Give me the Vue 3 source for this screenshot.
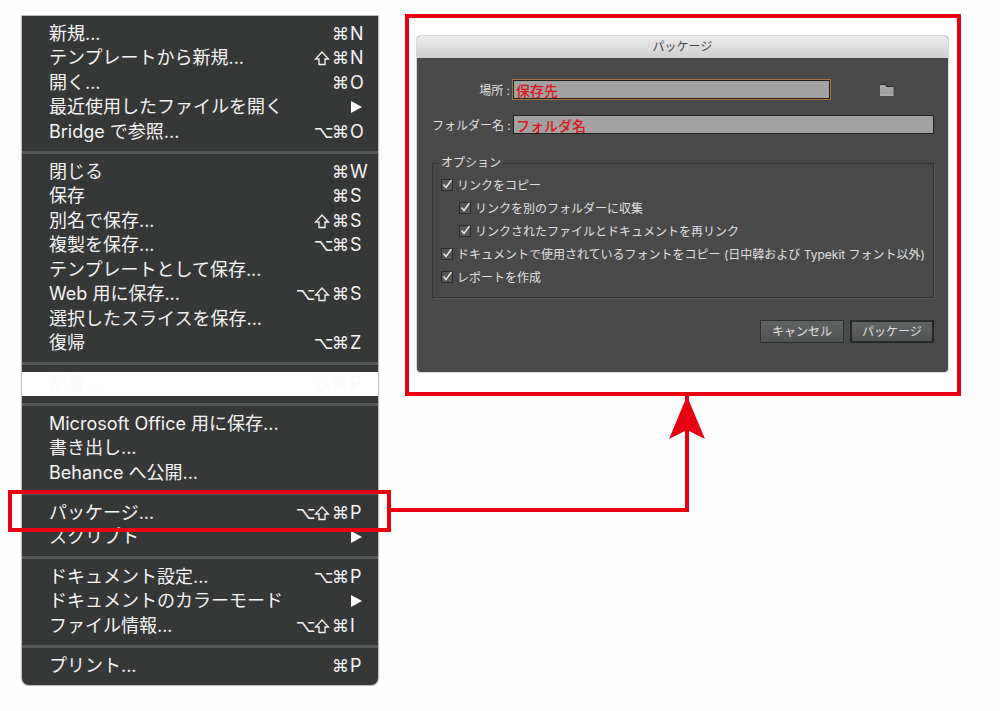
<script setup>
import { ref } from 'vue'

const groups = [
  [
    { label: '新規...', mods: ['⌘'], key: 'N' },
    { label: 'テンプレートから新規...', mods: ['⇧', '⌘'], key: 'N' },
    { label: '開く...', mods: ['⌘'], key: 'O' },
    { label: '最近使用したファイルを開く', sub: true },
    { label: 'Bridge で参照...', mods: ['⌥', '⌘'], key: 'O' },
  ],
  [
    { label: '閉じる', mods: ['⌘'], key: 'W' },
    { label: '保存', mods: ['⌘'], key: 'S' },
    { label: '別名で保存...', mods: ['⇧', '⌘'], key: 'S' },
    { label: '複製を保存...', mods: ['⌥', '⌘'], key: 'S' },
    { label: 'テンプレートとして保存...' },
    { label: 'Web 用に保存...', mods: ['⌥', '⇧', '⌘'], key: 'S' },
    { label: '選択したスライスを保存...' },
    { label: '復帰', mods: ['⌥', '⌘'], key: 'Z' },
  ],
  [{ label: '配置...', mods: ['⇧', '⌘'], key: 'P', masked: true }],
  [
    { label: 'Microsoft Office 用に保存...' },
    { label: '書き出し...' },
    { label: 'Behance へ公開...' },
  ],
  [
    { label: 'パッケージ...', mods: ['⌥', '⇧', '⌘'], key: 'P', marked: true },
    { label: 'スクリプト', sub: true },
  ],
  [
    { label: 'ドキュメント設定...', mods: ['⌥', '⌘'], key: 'P' },
    { label: 'ドキュメントのカラーモード', sub: true },
    { label: 'ファイル情報...', mods: ['⌥', '⇧', '⌘'], key: 'I' },
  ],
  [{ label: 'プリント...', mods: ['⌘'], key: 'P' }],
]

const place = ref('保存先')
const folder = ref('フォルダ名')
const options = ref([
  { label: 'リンクをコピー', on: true },
  { label: 'リンクを別のフォルダーに収集', on: true, nested: true },
  { label: 'リンクされたファイルとドキュメントを再リンク', on: true, nested: true },
  { label: 'ドキュメントで使用されているフォントをコピー (日中韓および Typekit フォント以外)', on: true },
  { label: 'レポートを作成', on: true },
])
</script>

<template>
  <main class="page">
    <nav class="menu">
      <ul v-for="(group, g) in groups" :key="g" class="group" :class="{ blank: group[0].masked }">
        <li v-for="item in group" :key="item.label" class="row" :class="{ marked: item.marked }">
          <button type="button" class="item">
            <span class="label">{{ item.label }}</span>
            <span v-if="item.mods" class="shortcut">
              <span v-for="m in item.mods" :key="m" class="mod">
                <svg v-if="m === '⇧'" class="shift" viewBox="0 0 16 16" role="img" aria-label="Shift">
                  <path
                    d="M8 2 L14.500 9 H11 V14.500 H5 V9 H1.500 Z"
                    fill="none"
                    stroke="currentColor"
                    stroke-width="1.300"
                  />
                </svg>
                <template v-else>{{ m }}</template>
              </span>
              <span class="key">{{ item.key }}</span>
            </span>
            <svg v-if="item.sub" class="more" viewBox="0 0 12 12" aria-hidden="true">
              <path d="M1 0 L12 6 L1 12 Z" fill="#fff" />
            </svg>
          </button>
        </li>
      </ul>
    </nav>

    <section class="detail">
      <div class="frame">
        <form class="dialog" @submit.prevent>
          <h1 class="title">パッケージ</h1>
          <div class="body">
            <div class="fields">
              <label for="place">場所 :</label>
              <div class="place">
                <input id="place" v-model="place" type="text" class="text active" />
                <button type="button" class="browse" aria-label="フォルダーを選択">
                  <svg viewBox="0 0 14 12" width="14" height="12" aria-hidden="true">
                    <defs>
                      <linearGradient id="fold" x1="0" y1="0" x2="0" y2="1">
                        <stop offset="0" stop-color="#adadad" />
                        <stop offset="1" stop-color="#979797" />
                      </linearGradient>
                    </defs>
                    <path d="M0 1 H5.500 L6.500 3 H13.500 V12 H0 Z" fill="url(#fold)" />
                    <path d="M0 .5 H5.500 L6.500 2.500 H13.500" fill="none" stroke="#2c2c2c" />
                    <path d="M0 11 H13.500" stroke="#bcbcbc" />
                  </svg>
                </button>
              </div>
              <label for="folder">フォルダー名 :</label>
              <input id="folder" v-model="folder" type="text" class="text" />
            </div>

            <fieldset class="options">
              <legend>オプション</legend>
              <label v-for="o in options" :key="o.label" class="option" :class="{ nested: o.nested }">
                <span class="check">
                  <input v-model="o.on" type="checkbox" />
                  <svg v-if="o.on" viewBox="0 0 12 12" aria-hidden="true">
                    <path d="M2.500 5.500 L5 8.500 L10.500 1" fill="none" stroke="#e4e4e4" stroke-width="1.500" />
                  </svg>
                </span>
                <span>{{ o.label }}</span>
              </label>
            </fieldset>

            <div class="actions">
              <button type="button" class="btn">キャンセル</button>
              <button type="submit" class="btn primary">パッケージ</button>
            </div>
          </div>
        </form>
      </div>
      <div class="connector">
        <svg class="arrow" viewBox="0 0 38 44" aria-hidden="true">
          <path d="M19 0 L37 43 L19 34 L1 43 Z" fill="#e60012" />
        </svg>
      </div>
    </section>
  </main>
</template>

<style>
body {
  margin: 0;
  background: #fefefe;
}
</style>

<style scoped>
.page {
  display: grid;
  grid-template-columns: 357fr 555fr;
  gap: 27px;
  align-items: start;
  padding: 14px 39px 24px 22px;
  font-family: Inter, "Liberation Sans", "Noto Sans CJK JP", sans-serif;
}
button,
input {
  font: inherit;
  color: inherit;
}
.menu {
  margin-top: 2px;
  background: #363737;
  color: #f4f4f4;
  border-radius: 0 0 7px 7px;
  box-shadow: 0 0 1px 1px #b4b4b4;
  font-size: 18px;
}
.group {
  list-style: none;
  margin: 0;
  padding: 5px 0 7px;
}
.group + .group {
  border-top: 3px solid #565757;
}
.row {
  position: relative;
  height: 25px;
}
.row:nth-child(even) {
  height: 24px;
}
.item {
  display: flex;
  align-items: center;
  width: 100%;
  height: 100%;
  padding: 0 0 0 27px;
  border: 0;
  background: none;
  text-align: left;
  line-height: 24px;
  white-space: nowrap;
}
.label {
  flex: 1;
}
.shortcut {
  display: flex;
}
.mod {
  display: flex;
  align-items: center;
  width: 18px;
  font-family: "DejaVu Sans", sans-serif;
  font-size: 17px;
}
.shift {
  width: 16px;
  height: 16px;
}
.key {
  width: 28px;
}
.more {
  width: 12px;
  height: 12px;
  margin-right: 16px;
}
.group.blank {
  padding: 7px 0;
}
.blank .row {
  height: 24px;
  background: #fff;
  color: #fbfbfb;
}
.marked {
  z-index: 1;
}
.marked::after {
  content: "";
  position: absolute;
  inset: -10px -13px -7px -14px;
  border: 4px solid #e60012;
  pointer-events: none;
}
.frame {
  padding: 18px 9px 20px 8px;
  border: 4px solid #e60012;
  background: #fff;
}
.dialog {
  border-radius: 4px;
  background: #494949;
  color: #e0e0e0;
  box-shadow: 0 0 1px 1px #d4d4d4;
  font-size: 12px;
}
.title {
  margin: 0;
  border-radius: 4px 4px 0 0;
  background: linear-gradient(#ececec, #cecece);
  color: #444;
  font-size: 12px;
  font-weight: 400;
  line-height: 22px;
  text-align: center;
}
.body {
  padding: 22px 14px 29px 15px;
}
.fields {
  display: grid;
  grid-template-columns: 78px 1fr;
  column-gap: 3px;
  row-gap: 16px;
  align-items: center;
}
.fields label {
  text-align: right;
  white-space: nowrap;
}
.place {
  display: flex;
  align-items: center;
}
.text {
  box-sizing: border-box;
  min-width: 0;
  width: 100%;
  height: 19px;
  padding: 0 2px;
  border: 1px solid #222;
  background: #a2a2a2;
  color: #dc1420;
  font-size: 14px;
  font-weight: 500;
  line-height: 16px;
  outline: 0;
}
.place .text {
  flex: 1;
}
.active {
  box-shadow: 0 0 0 1px #a8743c;
}
.browse {
  display: flex;
  margin: 0 40px 0 50px;
  padding: 0;
  border: 0;
  background: none;
}
.options {
  margin: 20px 0 0;
  padding: 1px 8px 9px;
  border: 1px solid #333;
  box-shadow: 1px 1px 0 #565656;
}
.options legend {
  margin-left: -2px;
  padding: 0 2px;
  line-height: 18px;
}
.option {
  display: flex;
  align-items: center;
  gap: 4px;
  height: 23px;
  white-space: nowrap;
}
.nested {
  margin-left: 18px;
}
.check {
  position: relative;
  display: flex;
}
.check input {
  appearance: none;
  box-sizing: border-box;
  width: 12px;
  height: 12px;
  margin: 0;
  border: 1px solid #2c2c2c;
  background: #555;
}
.check svg {
  position: absolute;
  inset: 0;
  overflow: visible;
}
.actions {
  display: flex;
  justify-content: flex-end;
  gap: 6px;
  margin-top: 22px;
}
.btn {
  width: 84px;
  height: 23px;
  padding: 0;
  border: 1px solid #2d2d2d;
  background: linear-gradient(#606363, #505353);
  line-height: 20px;
}
.primary {
  border: 2px solid #292929;
}
.connector {
  position: relative;
  box-sizing: border-box;
  width: calc(50% + 20px);
  height: 116px;
  margin-left: -14px;
  border: solid #e60012;
  border-width: 0 4px 4px 0;
}
.arrow {
  position: absolute;
  top: 0;
  right: -21px;
  width: 38px;
  height: 44px;
}
</style>
